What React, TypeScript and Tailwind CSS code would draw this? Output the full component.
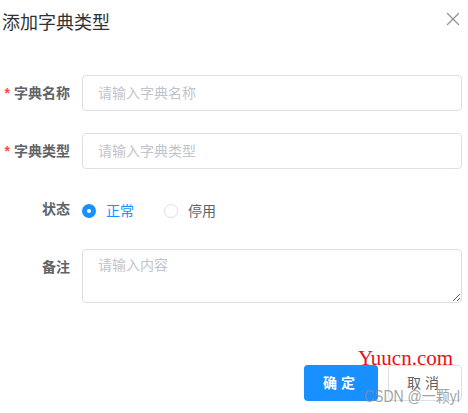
import { X } from "lucide-react";

const font = { fontFamily: '"Helvetica Neue", "Liberation Sans", "Noto Sans CJK SC", sans-serif' };

const Label = ({ text, required }: { text: string; required?: boolean }) => (
  <label className="w-[80px] shrink-0 pr-[12px] text-right text-[14px] leading-[36px] font-bold text-[#606266]">
    {required && <span className="mr-[4px] text-[#ff4949]">*</span>}
    {text}
  </label>
);

const Radio = ({ label, checked }: { label: string; checked?: boolean }) => (
  <label className="mr-[30px] flex items-center">
    {checked ? (
      <span className="flex h-[14px] w-[14px] items-center justify-center rounded-full bg-[#1890ff]">
        <span className="h-[4px] w-[4px] rounded-full bg-white" />
      </span>
    ) : (
      <span className="h-[14px] w-[14px] rounded-full border border-[#dcdfe6] bg-white" />
    )}
    <span className={`pl-[10px] text-[14px] ${checked ? "text-[#1890ff]" : "text-[#606266]"}`}>{label}</span>
  </label>
);

export default function App() {
  return (
    <div className="relative h-[413px] w-[468px] overflow-hidden bg-white" style={font}>
      {/* Header */}
      <div className="flex items-start justify-between pl-[2px] pr-[4px] pt-[11px]">
        <span className="text-[18px] leading-[24px] text-[#303133]">添加字典类型</span>
        <X className="mt-[-3px] h-[22px] w-[22px] text-[#909399]" strokeWidth={1.4} />
      </div>

      {/* Form */}
      <div className="pl-[2px] pr-[6px] pt-[40px]">
        <div className="mb-[22px] flex">
          <Label text="字典名称" required />
          <input
            className="h-[36px] flex-1 rounded-[4px] border border-[#dcdfe6] px-[15px] text-[14px] outline-none placeholder:text-[#c0c4cc]"
            placeholder="请输入字典名称"
          />
        </div>
        <div className="mb-[22px] flex">
          <Label text="字典类型" required />
          <input
            className="h-[36px] flex-1 rounded-[4px] border border-[#dcdfe6] px-[15px] text-[14px] outline-none placeholder:text-[#c0c4cc]"
            placeholder="请输入字典类型"
          />
        </div>
        <div className="mb-[22px] flex">
          <Label text="状态" />
          <div className="flex h-[36px] items-center pt-[4px]">
            <Radio label="正常" checked />
            <Radio label="停用" />
          </div>
        </div>
        <div className="flex">
          <Label text="备注" />
          <textarea
            className="h-[54px] flex-1 rounded-[4px] border border-[#dcdfe6] px-[15px] py-[5px] text-[14px] leading-[21px] outline-none placeholder:text-[#c0c4cc]"
            placeholder="请输入内容"
          />
        </div>
      </div>

      {/* Footer */}
      <div className="flex justify-end gap-[10px] pr-[6px] pt-[62px]">
        <button className="h-[36px] w-[74px] rounded-[4px] bg-[#1890ff] text-[14px] font-bold tracking-[4px] text-white">
          确定
        </button>
        <button className="h-[36px] w-[74px] rounded-[4px] border border-[#dcdfe6] bg-white text-[14px] tracking-[4px] text-[#606266]">
          取消
        </button>
      </div>

      {/* Watermarks */}
      <span
        className="absolute left-[358px] top-[346px] text-[21px] leading-[24px] text-[#e8101a]"
        style={{ fontFamily: '"Liberation Serif", serif' }}
      >
        Yuucn.com
      </span>
      <span className="absolute left-[364px] top-[387px] scale-y-[1.15] text-[14px] leading-[18px] text-[#8a8a8a]/80">
        CSDN @一颗yl
      </span>
    </div>
  );
}
